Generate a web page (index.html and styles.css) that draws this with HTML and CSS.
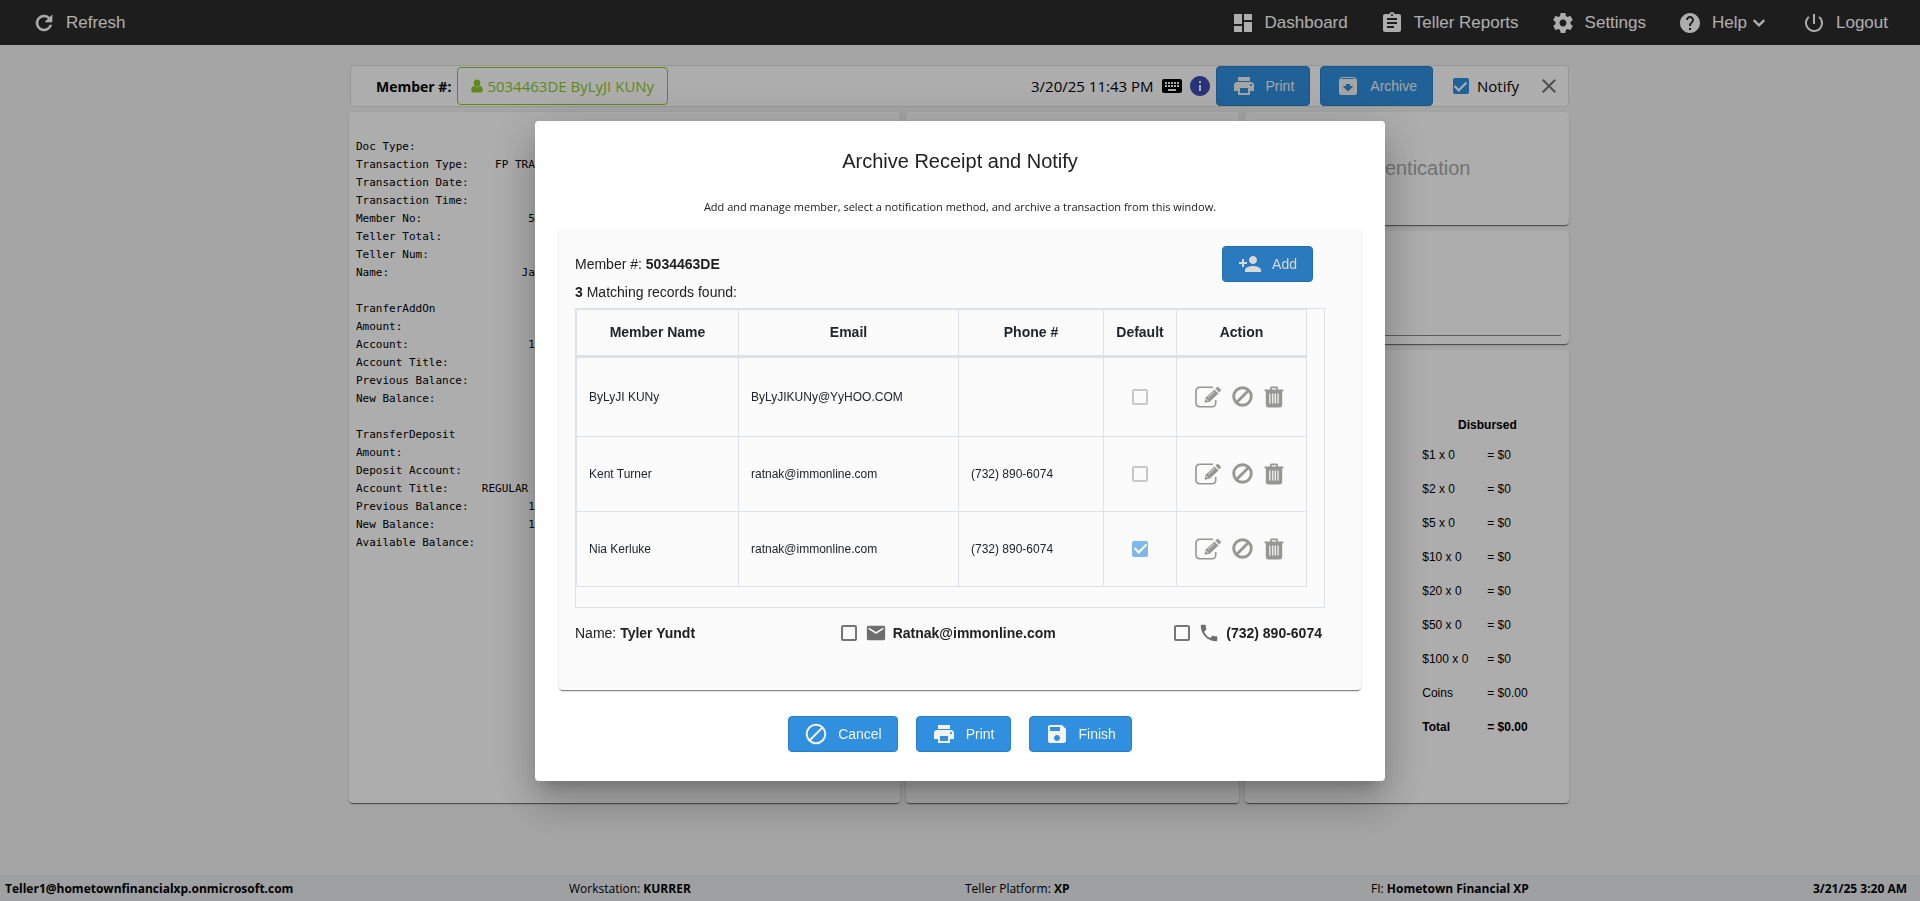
FILE: index.html
```html
<!DOCTYPE html>
<html lang="en">
<head>
<meta charset="UTF-8" />
<meta name="viewport" content="width=device-width, initial-scale=1" />
<title>Archive Receipt and Notify</title>
<link rel="stylesheet" href="styles.css">
</head>
<body>
  <!-- shared icons -->
  <svg class="sprite" aria-hidden="true">
    <symbol id="i-refresh" viewBox="0 0 24 24"><path d="M17.65 6.35A7.96 7.96 0 0 0 12 4a8 8 0 1 0 7.73 10h-2.08A6 6 0 1 1 12 6c1.66 0 3.14.69 4.22 1.78L13 11h7V4z" stroke="currentColor" stroke-width=".6"/></symbol>
    <symbol id="i-dashboard" viewBox="0 0 24 24"><path d="M3 13h8V3H3v10zm0 8h8v-6H3v6zm10 0h8V11h-8v10zm0-18v6h8V3h-8z"/></symbol>
    <symbol id="i-reports" viewBox="0 0 24 24"><path d="M19 3h-4.18C14.4 1.84 13.3 1 12 1s-2.4.84-2.82 2H5c-1.1 0-2 .9-2 2v14c0 1.1.9 2 2 2h14c1.1 0 2-.9 2-2V5c0-1.1-.9-2-2-2zm-7 0c.55 0 1 .45 1 1s-.45 1-1 1-1-.45-1-1 .45-1 1-1zm2 14H7v-2h7v2zm3-4H7v-2h10v2zm0-4H7V7h10v2z"/></symbol>
    <symbol id="i-settings" viewBox="0 0 24 24"><path d="M19.43 12.98c.04-.32.07-.64.07-.98s-.03-.66-.07-.98l2.11-1.65c.19-.15.24-.42.12-.64l-2-3.46c-.12-.22-.39-.3-.61-.22l-2.49 1c-.52-.4-1.08-.73-1.69-.98l-.38-2.65A.49.49 0 0 0 14 2h-4c-.25 0-.46.18-.49.42l-.38 2.65c-.61.25-1.17.59-1.69.98l-2.49-1c-.23-.09-.49 0-.61.22l-2 3.46c-.13.22-.07.49.12.64l2.11 1.65c-.04.32-.07.65-.07.98s.03.66.07.98l-2.11 1.65c-.19.15-.24.42-.12.64l2 3.46c.12.22.39.3.61.22l2.49-1c.52.4 1.08.73 1.69.98l.38 2.65c.03.24.24.42.49.42h4c.25 0 .46-.18.49-.42l.38-2.65c.61-.25 1.17-.59 1.69-.98l2.49 1c.23.09.49 0 .61-.22l2-3.46c.12-.22.07-.49-.12-.64l-2.11-1.65zM12 15.500c-1.93 0-3.5-1.57-3.5-3.5s1.57-3.5 3.5-3.5 3.5 1.57 3.5 3.5-1.57 3.5-3.5 3.5z"/></symbol>
    <symbol id="i-help" viewBox="0 0 24 24"><path d="M12 2C6.48 2 2 6.48 2 12s4.48 10 10 10 10-4.48 10-10S17.52 2 12 2zm1 17h-2v-2h2v2zm2.07-7.75l-.9.92C13.45 12.9 13 13.5 13 15h-2v-.5c0-1.1.45-2.1 1.17-2.83l1.24-1.26c.37-.36.59-.86.59-1.41 0-1.1-.9-2-2-2s-2 .9-2 2H8c0-2.21 1.79-4 4-4s4 1.79 4 4c0 .88-.36 1.68-.93 2.25z"/></symbol>
    <symbol id="i-chevron" viewBox="0 0 24 24"><path d="M3 7l9 9 9-9" fill="none" stroke="currentColor" stroke-width="4"/></symbol>
    <symbol id="i-power" viewBox="0 0 24 24"><path d="M13 3h-2v10h2V3zm4.83 2.17l-1.42 1.42A6.92 6.92 0 0 1 19 12a7 7 0 1 1-11.42-5.42L6.17 5.17A8.93 8.93 0 0 0 3 12a9 9 0 1 0 14.83-6.83z"/></symbol>
    <symbol id="i-user" viewBox="0 0 14 16"><path d="M7 .5a3.8 4.2 0 1 1 0 8.400 3.8 4.2 0 0 1 0-8.4zM3.6 8c1 1.2 2.1 1.7 3.4 1.7s2.4-.5 3.4-1.7c2.3.3 3.3 2.1 3.3 4.9 0 1.5-.8 2.6-2.2 2.600H2.500C1.1 15.5.3 14.4.3 12.9.3 10.1 1.300 8.3 3.6 8z"/></symbol>
    <symbol id="i-keyboard" viewBox="0 0 24 24"><path d="M20 5H4c-1.1 0-2 .9-2 2v10c0 1.1.9 2 2 2h16c1.1 0 2-.9 2-2V7c0-1.1-.9-2-2-2zm-9 3h2v2h-2V8zm0 3h2v2h-2v-2zM8 8h2v2H8V8zm0 3h2v2H8v-2zm-1 2H5v-2h2v2zm0-3H5V8h2v2zm9 7H8v-2h8v2zm0-4h-2v-2h2v2zm0-3h-2V8h2v2zm3 3h-2v-2h2v2zm0-3h-2V8h2v2z"/></symbol>
    <symbol id="i-info" viewBox="0 0 24 24"><path d="M12 2C6.48 2 2 6.48 2 12s4.48 10 10 10 10-4.48 10-10S17.52 2 12 2zm1 15h-2v-6h2v6zm0-8h-2V7h2v2z"/></symbol>
    <symbol id="i-print" viewBox="0 0 24 24"><path d="M19 8H5c-1.66 0-3 1.34-3 3v6h4v4h12v-4h4v-6c0-1.66-1.34-3-3-3zm-3 11H8v-5h8v5zm3-7c-.55 0-1-.45-1-1s.45-1 1-1 1 .45 1 1-.45 1-1 1zm-1-9H6v4h12V3z"/></symbol>
    <symbol id="i-archive" viewBox="0 0 24 24"><path d="M20.54 5.23l-1.39-1.68C18.88 3.21 18.47 3 18 3H6c-.47 0-.88.21-1.16.55L3.46 5.23C3.17 5.57 3 6.02 3 6.5V19c0 1.1.9 2 2 2h14c1.1 0 2-.9 2-2V6.5c0-.48-.17-.93-.46-1.27zM12 17.5L6.5 12H10v-2h4v2h3.5L12 17.5zM5.12 5l.81-1h12l.94 1H5.12z"/></symbol>
    <symbol id="i-close" viewBox="0 0 24 24"><path d="M19 6.41L17.59 5 12 10.59 6.41 5 5 6.41 10.59 12 5 17.59 6.41 19 12 13.41 17.59 19 19 17.59 13.41 12z"/></symbol>
    <symbol id="i-add" viewBox="0 0 24 24"><path d="M15 12c2.21 0 4-1.79 4-4s-1.79-4-4-4-4 1.79-4 4 1.79 4 4 4zm-9-2V7H4v3H1v2h3v3h2v-3h3v-2H6zm9 4c-2.67 0-8 1.34-8 4v2h16v-2c0-2.66-5.33-4-8-4z"/></symbol>
    <symbol id="i-edit" viewBox="0 0 26 22">
      <path d="M18 1.300H4.500A3.500 3.500 0 0 0 1 4.800v12.400a3.500 3.500 0 0 0 3.500 3.500h12.700a3.500 3.500 0 0 0 3.500-3.500V14" fill="none" stroke="currentColor" stroke-width="1.600"/>
      <path d="M9.500 16.800l1.300-5.200 8.700-8.200 4 4-8.800 8.300z"/>
      <path d="M20.400 2.600l1.400-1.300c.5-.5 1.200-.5 1.700 0l2 2c.5.5.5 1.200 0 1.700l-1.300 1.400z"/>
      <path d="M13.200 11.300l6.300-5.900M11.300 13l2 2" stroke="#fbfbfb" stroke-width=".8"/>
    </symbol>
    <symbol id="i-ban" viewBox="0 0 22 22"><g fill="none" stroke="currentColor" stroke-width="3"><circle cx="11" cy="11" r="9.2"/><path d="M5 17L17 5"/></g></symbol>
    <symbol id="i-trash" viewBox="0 0 20 22"><path fill-rule="evenodd" d="M6 3.500V2.200C6 1.200 6.700.5 7.700.5h4.600c1 0 1.700.7 1.700 1.700v1.300h5.500v1.800h-1.300V19c0 1.500-1 2.500-2.500 2.500H4.300c-1.500 0-2.500-1-2.500-2.500V5.300H.5V3.500zm1.700 0h4.600V2.200H7.700zM5.300 7.500v10h1.200v-10zm2.900 0v10h1.200v-10zm2.500 0v10h1.200v-10zm2.700 0v10h1.200v-10z"/></symbol>
    <symbol id="i-mail" viewBox="0 0 24 24"><path d="M20 4H4c-1.1 0-2 .9-2 2v12c0 1.1.9 2 2 2h16c1.1 0 2-.9 2-2V6c0-1.1-.9-2-2-2zm0 4l-8 5-8-5V6l8 5 8-5v2z"/></symbol>
    <symbol id="i-phone" viewBox="0 0 24 24"><path d="M20 15.500c-1.25 0-2.45-.2-3.57-.57a1 1 0 0 0-1.02.24l-2.2 2.2a15.05 15.05 0 0 1-6.59-6.58l2.2-2.21a.96.96 0 0 0 .25-1A11.36 11.36 0 0 1 8.500 4c0-.55-.45-1-1-1H4c-.55 0-1 .45-1 1 0 9.390 7.610 17 17 17 .55 0 1-.45 1-1v-3.500c0-.55-.45-1-1-1z"/></symbol>
    <symbol id="i-cancel" viewBox="0 0 24 24"><g fill="none" stroke="currentColor" stroke-width="2"><circle cx="12" cy="12" r="9.300"/><path d="M5.500 18.500l13-13"/></g></symbol>
    <symbol id="i-save" viewBox="0 0 24 24"><path d="M17 3H5a2 2 0 0 0-2 2v14c0 1.1.89 2 2 2h14c1.1 0 2-.9 2-2V7l-4-4zm-5 16c-1.66 0-3-1.34-3-3s1.34-3 3-3 3 1.34 3 3-1.34 3-3 3zm3-10H5V5h10v4z"/></symbol>
  </svg>

  <header class="topbar">
    <a href="#" class="nav-link"><svg class="icon"><use href="#i-refresh"/></svg>Refresh</a>
    <nav class="nav">
      <a href="#" class="nav-link"><svg class="icon"><use href="#i-dashboard"/></svg>Dashboard</a>
      <a href="#" class="nav-link"><svg class="icon"><use href="#i-reports"/></svg>Teller Reports</a>
      <a href="#" class="nav-link"><svg class="icon"><use href="#i-settings"/></svg>Settings</a>
      <a href="#" class="nav-link"><svg class="icon"><use href="#i-help"/></svg>Help<svg class="chevron"><use href="#i-chevron"/></svg></a>
      <a href="#" class="nav-link"><svg class="icon"><use href="#i-power"/></svg>Logout</a>
    </nav>
  </header>

  <main class="content">
    <div class="member-bar">
      <span class="member-label">Member #:</span>
      <button type="button" class="member-btn"><svg class="user-icon"><use href="#i-user"/></svg>5034463DE ByLyJI KUNy</button>
      <div class="bar-right">
        <span class="bar-date">3/20/25 11:43 PM</span>
        <svg class="icon"><use href="#i-keyboard"/></svg>
        <svg class="icon info"><use href="#i-info"/></svg>
        <button type="button" class="btn btn-tall"><svg class="icon"><use href="#i-print"/></svg>Print</button>
        <button type="button" class="btn btn-tall"><svg class="icon"><use href="#i-archive"/></svg>Archive</button>
        <label class="notify"><input type="checkbox" class="check" checked>Notify</label>
        <button type="button" class="close" aria-label="Close"><svg class="icon"><use href="#i-close"/></svg></button>
      </div>
    </div>

    <div class="panels">
      <section class="panel receipt">
<pre>Doc Type:
Transaction Type:    FP TRAN
Transaction Date:          0
Transaction Time:
Member No:                50
Teller Total:
Teller Num:
Name:                    Jam

TranferAddOn
Amount:
Account:                  10
Account Title:
Previous Balance:          4
New Balance:               4

TransferDeposit
Amount:
Deposit Account:
Account Title:     REGULAR S
Previous Balance:         10
New Balance:              10
Available Balance:</pre>
      </section>
      <section class="panel"></section>
      <div class="side">
        <section class="panel auth">Authentication</section>
        <section class="panel signature"><div class="sign-line"></div></section>
        <section class="panel cash">
          <table class="disbursed">
            <thead><tr><th colspan="2">Disbursed</th></tr></thead>
            <tbody>
              <tr><td>$1 x 0</td><td>= $0</td></tr>
              <tr><td>$2 x 0</td><td>= $0</td></tr>
              <tr><td>$5 x 0</td><td>= $0</td></tr>
              <tr><td>$10 x 0</td><td>= $0</td></tr>
              <tr><td>$20 x 0</td><td>= $0</td></tr>
              <tr><td>$50 x 0</td><td>= $0</td></tr>
              <tr><td>$100 x 0</td><td>= $0</td></tr>
              <tr><td>Coins</td><td>= $0.00</td></tr>
              <tr class="total"><td>Total</td><td>= $0.00</td></tr>
            </tbody>
          </table>
        </section>
      </div>
    </div>
  </main>

  <footer class="statusbar">
    <strong>Teller1@hometownfinancialxp.onmicrosoft.com</strong>
    <span>Workstation: <strong>KURRER</strong></span>
    <span>Teller Platform: <strong>XP</strong></span>
    <span>FI: <strong>Hometown Financial XP</strong></span>
    <strong class="clock">3/21/25 3:20 AM</strong>
  </footer>

  <div class="overlay">
    <div class="modal" role="dialog" aria-modal="true" aria-labelledby="modalTitle">
      <h2 id="modalTitle">Archive Receipt and Notify</h2>
      <p class="subtitle">Add and manage member, select a notification method, and archive a transaction from this window.</p>

      <div class="card">
        <div class="card-head">
          <span>Member #: <strong>5034463DE</strong></span>
          <button type="button" class="btn btn-dark"><svg class="icon"><use href="#i-add"/></svg>Add</button>
        </div>
        <p class="found"><strong>3</strong> Matching records found:</p>

        <div class="table-wrap">
          <table class="members">
            <colgroup><col class="c-name"><col class="c-email"><col class="c-phone"><col class="c-default"><col class="c-action"></colgroup>
            <thead>
              <tr><th>Member Name</th><th>Email</th><th>Phone #</th><th>Default</th><th>Action</th></tr>
            </thead>
            <tbody>
              <tr class="first">
                <td>ByLyJI KUNy</td><td>ByLyJIKUNy@YyHOO.COM</td><td></td>
                <td class="center"><input type="checkbox" class="check" disabled aria-label="Default for ByLyJI KUNy"></td>
                <td><div class="actions">
                  <button type="button" aria-label="Edit"><svg class="i-edit"><use href="#i-edit"/></svg></button>
                  <button type="button" aria-label="Disable"><svg class="i-ban"><use href="#i-ban"/></svg></button>
                  <button type="button" aria-label="Delete"><svg class="i-trash"><use href="#i-trash"/></svg></button>
                </div></td>
              </tr>
              <tr>
                <td>Kent Turner</td><td>ratnak@immonline.com</td><td>(732) 890-6074</td>
                <td class="center"><input type="checkbox" class="check" disabled aria-label="Default for Kent Turner"></td>
                <td><div class="actions">
                  <button type="button" aria-label="Edit"><svg class="i-edit"><use href="#i-edit"/></svg></button>
                  <button type="button" aria-label="Disable"><svg class="i-ban"><use href="#i-ban"/></svg></button>
                  <button type="button" aria-label="Delete"><svg class="i-trash"><use href="#i-trash"/></svg></button>
                </div></td>
              </tr>
              <tr>
                <td>Nia Kerluke</td><td>ratnak@immonline.com</td><td>(732) 890-6074</td>
                <td class="center"><input type="checkbox" class="check" disabled checked aria-label="Default for Nia Kerluke"></td>
                <td><div class="actions">
                  <button type="button" aria-label="Edit"><svg class="i-edit"><use href="#i-edit"/></svg></button>
                  <button type="button" aria-label="Disable"><svg class="i-ban"><use href="#i-ban"/></svg></button>
                  <button type="button" aria-label="Delete"><svg class="i-trash"><use href="#i-trash"/></svg></button>
                </div></td>
              </tr>
            </tbody>
          </table>
        </div>

        <div class="contact">
          <span>Name: <strong>Tyler Yundt</strong></span>
          <label><input type="checkbox" class="check"><svg class="icon"><use href="#i-mail"/></svg><strong>Ratnak@immonline.com</strong></label>
          <label><input type="checkbox" class="check"><svg class="icon"><use href="#i-phone"/></svg><strong>(732) 890-6074</strong></label>
        </div>
      </div>

      <div class="modal-actions">
        <button type="button" class="btn"><svg class="icon"><use href="#i-cancel"/></svg>Cancel</button>
        <button type="button" class="btn"><svg class="icon"><use href="#i-print"/></svg>Print</button>
        <button type="button" class="btn"><svg class="icon"><use href="#i-save"/></svg>Finish</button>
      </div>
    </div>
  </div>
</body>
</html>
```
FILE: styles.css
```css
/* Reset and base */
* {
  box-sizing: border-box;
}
body {
  margin: 0;
  min-height: 100vh;
  display: flex;
  flex-direction: column;
  background: #f3f3f3;
  color: #000;
  font-family: "Liberation Sans", Arial, sans-serif;
  font-size: 14px;
}
button {
  font-family: inherit;
  cursor: pointer;
}
svg {
  fill: currentColor;
  flex: none;
}
.sprite {
  display: none;
}
.icon {
  width: 24px;
  height: 24px;
}

/* Top bar */
.topbar {
  display: flex;
  justify-content: space-between;
  align-items: center;
  height: 45px;
  padding: 0 32px;
  background: #2c2c2c;
}
.nav {
  display: flex;
  gap: 32px;
}
.nav-link {
  display: flex;
  align-items: center;
  gap: 10px;
  color: #fff;
  font-size: 17px;
  text-decoration: none;
}
.chevron {
  width: 14px;
  height: 14px;
  margin: 0 4px 0 -5px;
}

/* Main area */
.content {
  flex: 1;
  display: flex;
  flex-direction: column;
  gap: 5px;
  width: 100%;
  max-width: 1222px;
  margin: 0 auto;
  padding: 20px 2px 72px 0;
}
.member-bar {
  display: flex;
  align-items: center;
  height: 42px;
  margin-left: 1px;
  padding-left: 25px;
  background: #fff;
  border: 1px solid #dedede;
  border-radius: 4px;
  font-family: "Open Sans", "Noto Sans", sans-serif;
  font-size: 15px;
}
.member-label {
  font-size: 14px;
  font-weight: 700;
}
.member-btn {
  display: flex;
  align-items: center;
  gap: 4px;
  height: 38px;
  margin-left: 6px;
  padding: 0 13px;
  background: #fff;
  border: 1px solid #8bc926;
  border-radius: 4px;
  color: #8bc926;
  font-size: 15px;
}
.user-icon {
  width: 12px;
  height: 14px;
}
.bar-right {
  display: flex;
  align-items: center;
  margin-left: auto;
}
.bar-date {
  margin-right: 6px;
}
.info {
  margin: 0 4px;
  color: #3f4bb5;
}
.notify {
  display: flex;
  align-items: center;
  gap: 8px;
  margin-left: 10px;
}
.close {
  display: flex;
  margin: 0 7px 0 18px;
  padding: 0;
  background: none;
  border: none;
  color: #777;
}
.panels {
  flex: 1;
  display: grid;
  grid-template-columns: 551fr 334fr 324fr;
  gap: 6px;
}
.panel {
  background: #fff;
  border-radius: 4px;
  box-shadow: 0 2px 1px -1px rgba(0, 0, 0, 0.4), 0 1px 1px rgba(0, 0, 0, 0.2), 0 1px 3px rgba(0, 0, 0, 0.12);
}
.receipt pre {
  margin: 0;
  padding: 26px 7px;
  font-family: "DejaVu Sans Mono", monospace;
  font-size: 11px;
  line-height: 18px;
}
.side {
  display: flex;
  flex-direction: column;
  gap: 6px;
}
.auth,
.signature {
  display: flex;
  height: 113px;
}
.auth {
  justify-content: center;
  align-items: center;
  color: #aaa;
  font-size: 20px;
}
.signature {
  align-items: flex-end;
  padding: 8px;
}
.sign-line {
  flex: 1;
  border-top: 1px solid #888;
}
.cash {
  flex: 1;
  padding: 62px 0 0 176px;
}
.disbursed {
  border-collapse: collapse;
  font-size: 12px;
}
.disbursed th {
  height: 26px;
  padding: 0 0 0 26px;
}
.disbursed td {
  height: 34px;
  padding: 0 0 0 1px;
}
.disbursed td:first-child {
  width: 65px;
}
.total {
  font-weight: 700;
}

/* Status bar */
.statusbar {
  display: grid;
  grid-template-columns: 564fr 396fr 406fr 270fr 266fr;
  align-items: center;
  height: 26px;
  padding: 0 13px 0 5px;
  background: #e9ecef;
  font-family: "Open Sans", "Noto Sans", sans-serif;
  font-size: 12px;
  white-space: nowrap;
}
.clock {
  text-align: right;
}

/* Buttons and check boxes */
.btn {
  display: flex;
  align-items: center;
  gap: 10px;
  height: 36px;
  padding: 0 15px;
  background: #308fdf;
  border: 1px solid #2a7fc8;
  border-radius: 4px;
  color: #f3f3f3;
  font-size: 14px;
}
.btn-tall {
  height: 40px;
  margin-right: 10px;
  font-family: "Liberation Sans", Arial, sans-serif;
}
.btn-dark {
  background: #2a7ac0;
  border-color: #246caa;
  color: #d9d9d9;
}
.check {
  appearance: none;
  display: inline-grid;
  place-content: center;
  width: 16px;
  height: 16px;
  margin: 0;
  border: 2px solid #757575;
  border-radius: 2px;
}
.check:checked {
  background: #308fdf;
  border-color: #308fdf;
}
.check:checked::after {
  content: "";
  width: 5px;
  height: 10px;
  margin-bottom: 3px;
  border: solid #fff;
  border-width: 0 2px 2px 0;
  transform: rotate(45deg);
}
.check:disabled {
  border-color: #c8c8c8;
}
.check:disabled:checked {
  background: #7fb8ea;
  border-color: #7fb8ea;
}

/* Modal */
.overlay {
  position: fixed;
  inset: 0;
  display: flex;
  justify-content: center;
  align-items: center;
  background: rgba(0, 0, 0, 0.32);
}
.modal {
  width: 100%;
  max-width: 850px;
  padding: 28px 24px 29px;
  background: #fff;
  border-radius: 4px;
  color: #212121;
  box-shadow: 0 11px 15px -7px rgba(0, 0, 0, 0.2), 0 24px 38px 3px rgba(0, 0, 0, 0.14), 0 9px 46px 8px rgba(0, 0, 0, 0.12);
}
.modal h2 {
  margin: 0 0 24px;
  font-size: 20px;
  font-weight: 400;
  line-height: 24px;
  text-align: center;
}
.subtitle {
  margin: 0 0 12px;
  font-family: "Open Sans", "Noto Sans", sans-serif;
  font-size: 11px;
  line-height: 20px;
  text-align: center;
}
.card {
  padding: 17px 36px 46px 16px;
  background: #fbfbfb;
  border-radius: 4px;
  box-shadow: 0 2px 1px -1px rgba(0, 0, 0, 0.4), 0 1px 1px rgba(0, 0, 0, 0.14), 0 1px 3px rgba(0, 0, 0, 0.12);
}
.card-head {
  display: flex;
  justify-content: space-between;
  align-items: center;
  padding-right: 12px;
}
.found {
  margin: 0 0 6px;
  line-height: 20px;
}
.table-wrap {
  padding: 0 17px 20px 0;
  border: 1px solid #dee2e6;
}
.members {
  width: 100%;
  border-collapse: collapse;
  table-layout: fixed;
  color: #212529;
  font-size: 12px;
}
.c-name { width: 162px; }
.c-email { width: 220px; }
.c-phone { width: 145px; }
.c-default { width: 73px; }
.members th,
.members td {
  padding: 0 12px;
  border: 1px solid #dee2e6;
}
.members th {
  height: 47px;
  padding: 0;
  border-bottom-width: 3px;
  font-size: 14px;
}
.members td {
  height: 75px;
}
.members .first td {
  height: 80px;
}
.members .center {
  padding: 0;
  text-align: center;
}
.members .check {
  vertical-align: middle;
}
.actions {
  display: flex;
  justify-content: center;
  align-items: center;
  gap: 11px;
  margin-right: 4px;
}
.actions button {
  display: flex;
  padding: 0;
  background: none;
  border: none;
  color: #969692;
}
.i-edit { width: 26px; height: 22px; }
.i-ban { width: 21px; height: 21px; }
.i-trash { width: 20px; height: 22px; }
.contact {
  display: grid;
  grid-template-columns: 266fr 334fr auto;
  align-items: center;
  padding: 14px 3px 0 0;
}
.contact label {
  display: flex;
  align-items: center;
}
.contact .icon {
  width: 22px;
  height: 22px;
  margin: 0 6px 0 8px;
  color: #6e6e6e;
}
.modal-actions {
  display: flex;
  justify-content: center;
  gap: 18px;
  margin-top: 26px;
}
```
